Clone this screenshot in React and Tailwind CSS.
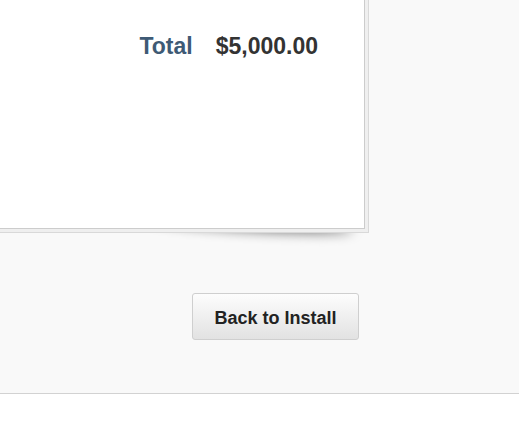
export default function App() {
  return (
    <div className="w-[519px] h-[439px] bg-white flex flex-col overflow-hidden" style={{ fontFamily: '"Liberation Sans", Arial, sans-serif' }}>
      <div className="h-[394px] bg-[#f9f9f9] border-b border-[#d2d2d2] shadow-[0_1px_0_#ececec] flex flex-col shrink-0">
        <div className="relative w-[369px]">
          <div className="absolute right-[16px] bottom-[2px] w-[200px] h-[12px] rounded-[50%] bg-black/55 blur-[6px] rotate-[3deg]"></div>
          <div className="relative bg-[#efefef] pr-[3px] pb-[3px] border-r border-b border-[#d9d9d9]">
            <div className="h-[229px] bg-white border-r border-b border-[#cccccc] flex justify-end items-start pt-[35px] pr-[46px]">
              <div className="flex gap-[23px] text-[23px] leading-[23px] font-bold">
                <span className="text-[#3e5a75]">Total</span>
                <span className="text-[#333333]">$5,000.00</span>
              </div>
            </div>
          </div>
        </div>
        <div className="mt-[60px] ml-[192px]">
          <button className="w-[167px] h-[47px] rounded-[3px] border border-[#cfcfcf] bg-gradient-to-b from-[#fdfdfd] to-[#e2e2e2] text-[18px] font-bold text-[#222222] flex items-center justify-center pt-[3px]">
            Back to Install
          </button>
        </div>
      </div>
      <div className="flex-1 bg-white"></div>
    </div>
  );
}
